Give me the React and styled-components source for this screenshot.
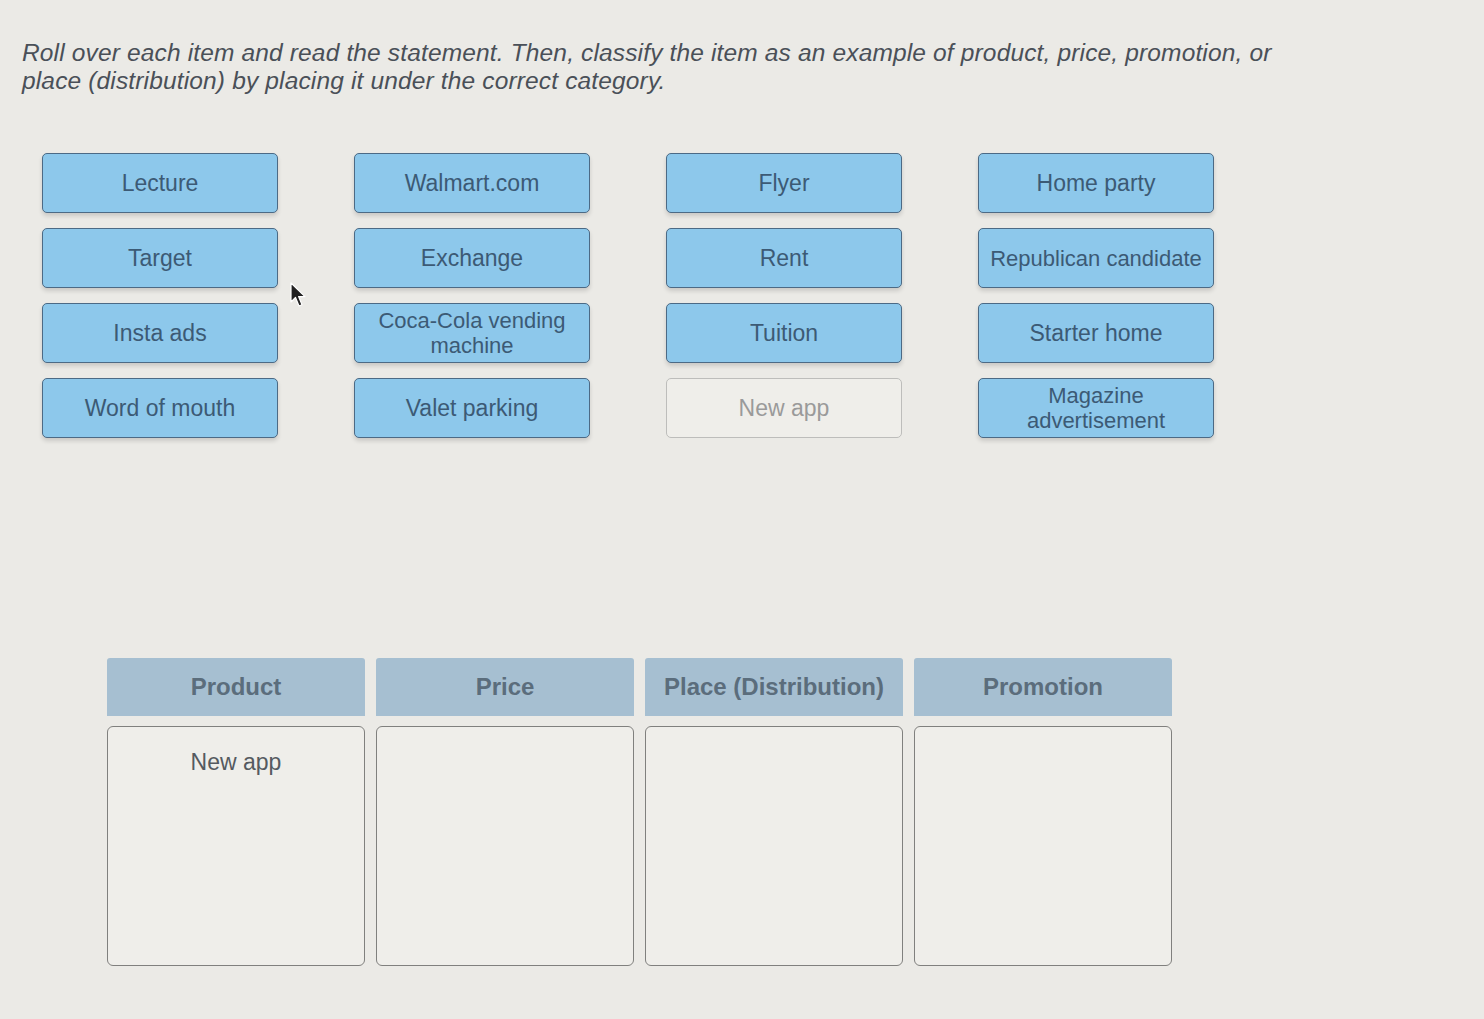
import React from "react";
import styled, { createGlobalStyle } from "styled-components";

const Global = createGlobalStyle`
  html, body { margin: 0; padding: 0; background: #ebeae6; }
  body { font-family: "Liberation Sans", Arial, sans-serif; }
`;

const Page = styled.div`
  position: relative;
  width: 1484px;
  height: 1019px;
  box-sizing: border-box;
  padding: 39px 22px 0 22px;
  background: #ebeae6;
  overflow: hidden;
`;

const Instructions = styled.p`
  margin: 0;
  font-style: italic;
  font-size: 24.5px;
  line-height: 28px;
  color: #4a5058;
  letter-spacing: 0.15px;
  white-space: nowrap;
`;

const TileGrid = styled.div`
  display: grid;
  grid-template-columns: repeat(4, 236px);
  column-gap: 76px;
  row-gap: 15px;
  margin: 58px 0 0 20px;
`;

const Tile = styled.div`
  box-sizing: border-box;
  height: 60px;
  display: flex;
  align-items: center;
  justify-content: center;
  text-align: center;
  border-radius: 5px;
  font-size: ${(p) => (p.$small ? "22px" : "23px")};
  line-height: 25px;
  padding: 0 4px;
  white-space: nowrap;
  background: ${(p) => (p.$placed ? "#efeeea" : "#8dc8eb")};
  border: 1.5px solid ${(p) => (p.$placed ? "#bdbdbb" : "#4c6a85")};
  color: ${(p) => (p.$placed ? "#9a9a9a" : "#3c5a75")};
  box-shadow: ${(p) => (p.$placed ? "none" : "0 3px 4px rgba(0,0,0,0.14)")};
`;

const CategoryGrid = styled.div`
  display: grid;
  grid-template-columns: repeat(4, 258px);
  column-gap: 11px;
  margin: 220px 0 0 85px;
`;

const Column = styled.div`
  display: flex;
  flex-direction: column;
  gap: 10px;
`;

const Header = styled.div`
  height: 58px;
  display: flex;
  align-items: center;
  justify-content: center;
  background: #a6bfd1;
  border-radius: 3px 3px 0 0;
  font-weight: bold;
  font-size: 24px;
  color: #5b6d7c;
`;

const DropBox = styled.div`
  box-sizing: border-box;
  height: 240px;
  border: 1.5px solid #80807e;
  border-radius: 6px;
  background: #efeeea;
  padding-top: 22px;
  text-align: center;
  font-size: 23px;
  color: #555a60;
`;

const Cursor = styled.svg`
  position: absolute;
  left: 290px;
  top: 282px;
  width: 17px;
  height: 26px;
`;

const tiles = [
  ["Lecture"], ["Walmart.com"], ["Flyer"], ["Home party"],
  ["Target"], ["Exchange"], ["Rent"], ["Republican candidate", true],
  ["Insta ads"], ["Coca-Cola vending machine", true], ["Tuition"], ["Starter home"],
  ["Word of mouth"], ["Valet parking"], ["New app", false, true], ["Magazine advertisement", true],
];

const categories = [
  { name: "Product", items: ["New app"] },
  { name: "Price", items: [] },
  { name: "Place (Distribution)", items: [] },
  { name: "Promotion", items: [] },
];

export default function App() {
  return (
    <>
      <Global />
      <Page>
        <Instructions>
          Roll over each item and read the statement. Then, classify the item as an example of product, price, promotion, or
          <br />
          place (distribution) by placing it under the correct category.
        </Instructions>
        <TileGrid>
          {tiles.map(([label, small, placed]) => (
            <Tile key={label} $small={small} $placed={placed}>
              {label === "Coca-Cola vending machine" ? (
                <span>Coca-Cola vending<br />machine</span>
              ) : label === "Magazine advertisement" ? (
                <span>Magazine<br />advertisement</span>
              ) : (
                label
              )}
            </Tile>
          ))}
        </TileGrid>
        <CategoryGrid>
          {categories.map((c) => (
            <Column key={c.name}>
              <Header>{c.name}</Header>
              <DropBox>
                {c.items.map((i) => (
                  <div key={i}>{i}</div>
                ))}
              </DropBox>
            </Column>
          ))}
        </CategoryGrid>
        <Cursor viewBox="0 0 17 26">
          <path d="M1 1 L1 20 L5.5 15.5 L9 24 L12 22.8 L8.6 14.6 L15 14.6 Z" fill="#222" stroke="#fff" strokeWidth="1.2" strokeLinejoin="round" />
        </Cursor>
      </Page>
    </>
  );
}
